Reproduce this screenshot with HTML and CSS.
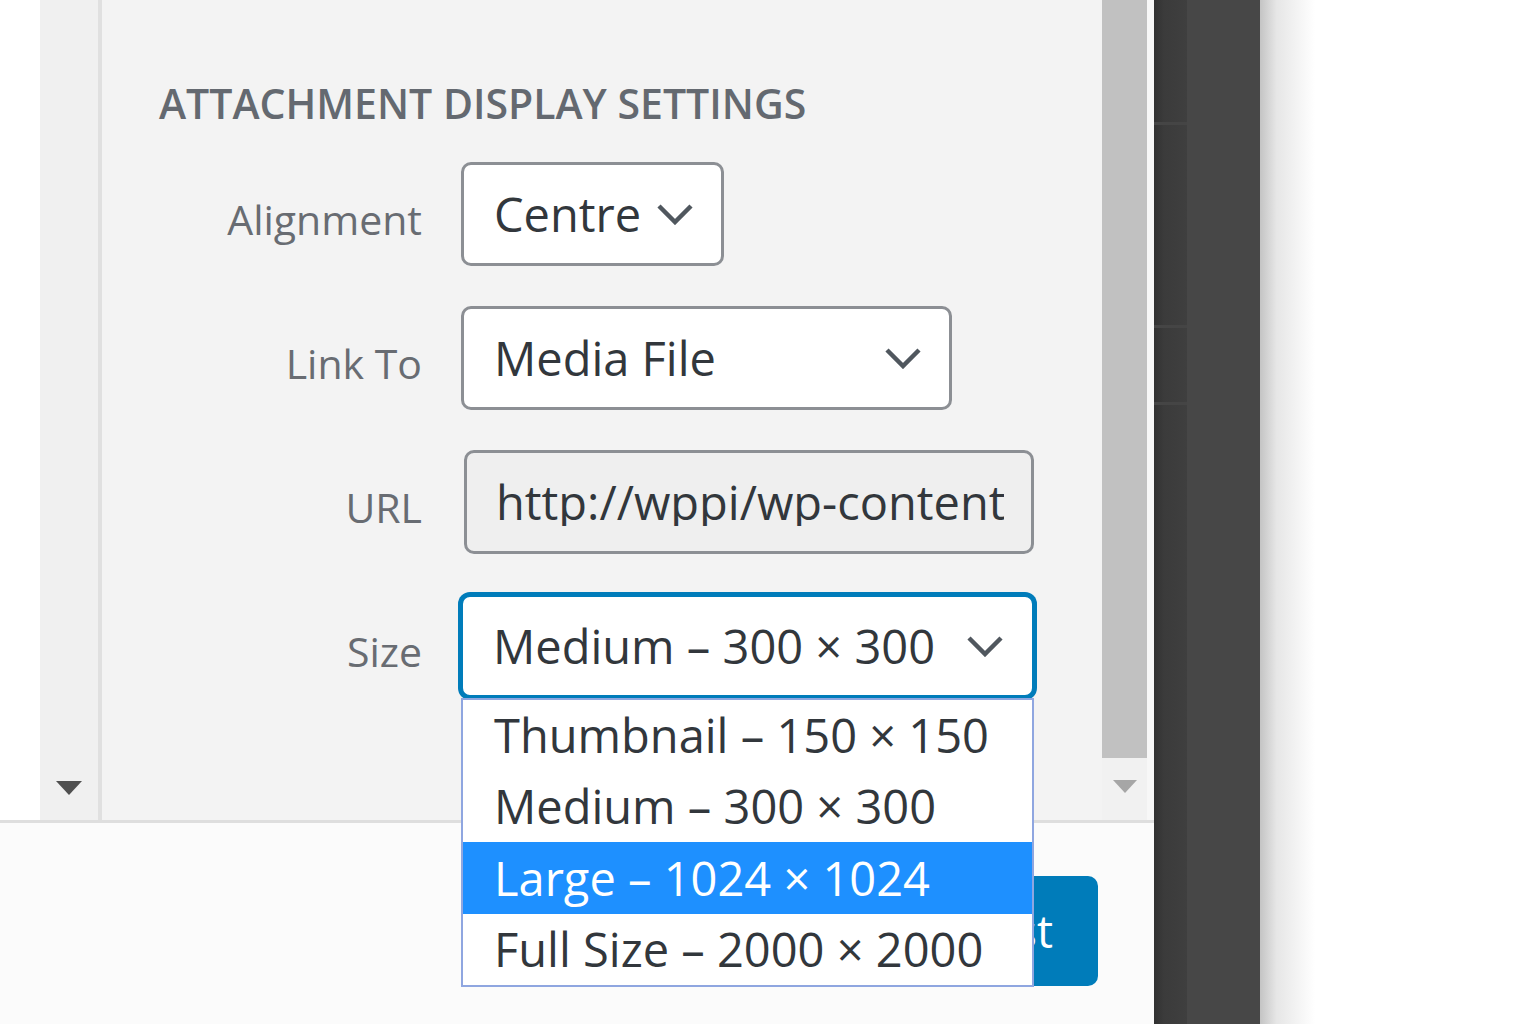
FILE: index.html
```html
<!DOCTYPE html>
<html lang="en">
<head>
<meta charset="utf-8">
<title>Attachment Display Settings</title>
<link rel="stylesheet" href="styles.css">
</head>
<body>
<div class="modal">
  <div class="content">
    <div class="gutter"></div>
    <div class="lscroll"><span class="arrow arrow-dark"></span></div>
    <div class="sidebar">
      <h2 class="heading">Attachment Display Settings</h2>
      <div class="settings">
        <span class="name">Alignment</span>
        <div class="select sel-align">
          <span class="val">Centre</span>
          <svg class="chev" width="38" height="22" viewBox="0 0 38 22"><path d="M3 3 L19 19 L35 3" fill="none" stroke="#50575e" stroke-width="4.5"/></svg>
        </div>

        <span class="name">Link To</span>
        <div class="select sel-link">
          <span class="val">Media File</span>
          <svg class="chev" width="38" height="22" viewBox="0 0 38 22"><path d="M3 3 L19 19 L35 3" fill="none" stroke="#50575e" stroke-width="4.5"/></svg>
        </div>

        <span class="name">URL</span>
        <div class="select url">
          <span class="url-text">http://wppi/wp-content/uploads/2020/01/image.jpg</span>
        </div>

        <span class="name">Size</span>
        <div class="select sel-size">
          <span class="val">Medium – 300 × 300</span>
          <svg class="chev" width="38" height="22" viewBox="0 0 38 22"><path d="M3 3 L19 19 L35 3" fill="none" stroke="#50575e" stroke-width="4.5"/></svg>
          <ul class="dropdown">
            <li class="opt">Thumbnail – 150 × 150</li>
            <li class="opt">Medium – 300 × 300</li>
            <li class="opt opt-active">Large – 1024 × 1024</li>
            <li class="opt">Full Size – 2000 × 2000</li>
          </ul>
        </div>
      </div>
    </div>
    <div class="rscroll">
      <div class="track">
        <div class="thumb"></div>
        <span class="arrow arrow-light"></span>
      </div>
      <div class="strip"></div>
    </div>
  </div>
  <div class="toolbar">
    <button class="insert" type="button">Insert into post</button>
  </div>
</div>
<div class="dark">
  <div class="band">
    <div class="seg seg1"></div>
    <div class="seg seg2"></div>
    <div class="seg seg3"></div>
    <div class="seg seg4"></div>
  </div>
  <div class="dark-main"></div>
</div>
<div class="shadow"></div>
<div class="rest"></div>
</body>
</html>
```

FILE: styles.css
```css
* { box-sizing: border-box; }
html, body { margin: 0; padding: 0; }
body {
  width: 1536px;
  height: 1024px;
  overflow: hidden;
  background: #ffffff;
  font-family: "Open Sans", "Noto Sans", sans-serif;
  display: flex;
}

.modal {
  width: 1154px;
  flex: none;
  display: flex;
  flex-direction: column;
}

.content {
  height: 820px;
  flex: none;
  display: flex;
}

.gutter { width: 40px; background: #ffffff; }

.lscroll {
  width: 62px;
  background: #f0f0f0;
  border-right: 4px solid #e0e0e0;
  display: flex;
  flex-direction: column;
  justify-content: flex-end;
  align-items: center;
  padding-bottom: 25px;
}

.arrow {
  display: block;
  width: 0;
  height: 0;
  border-left: 13px solid transparent;
  border-right: 13px solid transparent;
  border-top: 14px solid #505050;
}
.arrow-light {
  border-left-width: 12px;
  border-right-width: 12px;
  border-top: 13px solid #a6a6a6;
  margin: 22px 0 0 11px;
}

.sidebar {
  flex: 1;
  background: #f3f3f3;
  padding-left: 57px;
}

.heading {
  margin: 83px 0 38px;
  font-size: 41px;
  line-height: 41px;
  font-weight: 600;
  text-transform: uppercase;
  color: #646970;
}

.settings {
  display: grid;
  grid-template-columns: 263px auto;
  grid-auto-rows: 104px;
  column-gap: 39px;
  row-gap: 40px;
  justify-items: start;
}

.name {
  justify-self: end;
  font-size: 41px;
  line-height: 41px;
  padding-top: 37px;
  color: #686c72;
}

.select {
  height: 104px;
  border: 3px solid #8c8f94;
  border-radius: 10px;
  background: #ffffff;
  display: flex;
  align-items: center;
  justify-content: space-between;
  padding: 0 27px 0 30px;
  font-size: 47px;
  line-height: 48px;
  color: #32373c;
  white-space: nowrap;
}

.sel-align { width: 263px; }
.sel-link { width: 491px; }

.url {
  width: 570px;
  margin-left: 3px;
  background: #efefef;
  padding: 0 27px 0 29px;
}
.url-text {
  display: block;
  width: 100%;
  overflow: hidden;
  white-space: nowrap;
}

.sel-size {
  width: 575px;
  margin-left: -1px;
  border-color: #007cba;
  box-shadow: 0 0 0 2px #007cba;
  position: relative;
  padding-right: 28px;
}

.chev { flex: none; display: block; }

.dropdown {
  position: absolute;
  top: calc(100% + 3px);
  left: -2px;
  width: 573px;
  margin: 0;
  padding: 0;
  list-style: none;
  background: #ffffff;
  border: 2px solid #8fa6e0;
  z-index: 10;
}
.opt {
  height: 71px;
  line-height: 71px;
  padding-left: 31px;
  font-size: 47px;
  color: #32373c;
}
.opt-active {
  height: 72px;
  line-height: 72px;
  background: #1e90ff;
  color: #ffffff;
}

.rscroll {
  width: 52px;
  display: flex;
}
.track {
  width: 45px;
  background: #f1f1f1;
}
.thumb {
  width: 45px;
  height: 758px;
  background: #c1c1c1;
}
.strip {
  width: 7px;
  background: #f7f7f7;
}

.toolbar {
  flex: 1;
  border-top: 3px solid #dedede;
  background: #fbfbfb;
  display: flex;
  justify-content: flex-end;
  align-items: flex-start;
  padding: 53px 56px 0 0;
}

.insert {
  height: 110px;
  padding: 0 45px;
  border: none;
  border-radius: 10px;
  background: #007cba;
  color: #ffffff;
  font-family: inherit;
  font-size: 45px;
  line-height: 110px;
  white-space: nowrap;
}

.dark {
  width: 106px;
  flex: none;
  display: flex;
}
.band {
  width: 33px;
  display: flex;
  flex-direction: column;
  background: linear-gradient(to right, #313131, #3b3b3b 30%, #3f3f3f);
}
.seg { border-bottom: 3px solid #454545; }
.seg1 { height: 125px; }
.seg2 { height: 203px; }
.seg3 { height: 77px; }
.seg4 { flex: 1; border-bottom: none; }
.dark-main {
  flex: 1;
  background: #474747;
}

.shadow {
  width: 55px;
  flex: none;
  background: linear-gradient(to right, #c4c4c4, #e6e6e6 30%, #ffffff);
}
.rest { flex: 1; background: #ffffff; }
```
